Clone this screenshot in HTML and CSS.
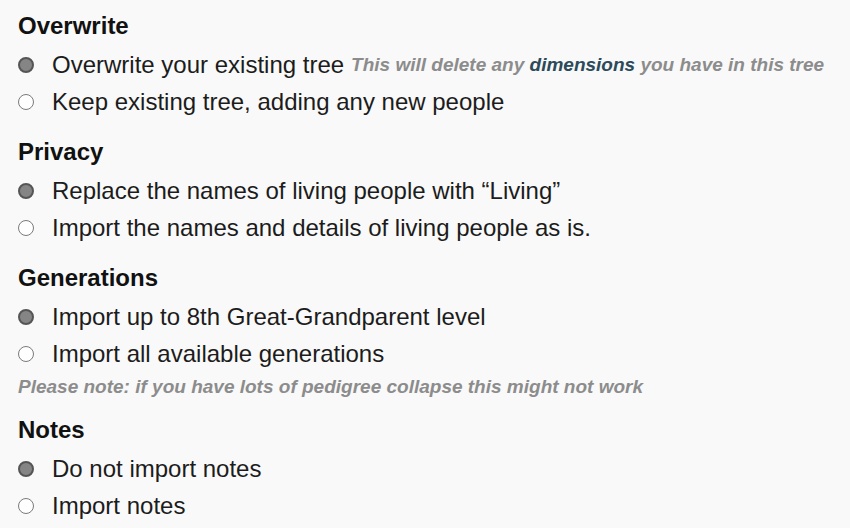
FILE: index.html
```html
<!DOCTYPE html>
<html lang="en">
<head>
  <meta charset="UTF-8">
  <meta name="viewport" content="width=device-width, initial-scale=1.0">
  <title>Import options</title>
  <link rel="stylesheet" href="styles.css">
</head>
<body>
  <form class="options">
    <section class="group">
      <h2>Overwrite</h2>
      <label class="choice"><input type="radio" name="overwrite" checked> Overwrite your existing tree <em class="hint">This will delete any <a href="#">dimensions</a> you have in this tree</em></label>
      <label class="choice"><input type="radio" name="overwrite"> Keep existing tree, adding any new people</label>
    </section>

    <section class="group">
      <h2>Privacy</h2>
      <label class="choice"><input type="radio" name="privacy" checked> Replace the names of living people with “Living”</label>
      <label class="choice"><input type="radio" name="privacy"> Import the names and details of living people as is.</label>
    </section>

    <section class="group">
      <h2>Generations</h2>
      <label class="choice"><input type="radio" name="generations" checked> Import up to 8th Great-Grandparent level</label>
      <label class="choice"><input type="radio" name="generations"> Import all available generations</label>
      <p class="note">Please note: if you have lots of pedigree collapse this might not work</p>
    </section>

    <section class="group">
      <h2>Notes</h2>
      <label class="choice"><input type="radio" name="notes" checked> Do not import notes</label>
      <label class="choice"><input type="radio" name="notes"> Import notes</label>
    </section>
  </form>
</body>
</html>
```

FILE: styles.css
```css
body {
  margin: 0;
  padding: 11px 18px 0;
  background-color: #f9f9f9;
  color: #1a1a1a;
  font-family: "Liberation Sans", Arial, sans-serif;
}
.group {
  margin-bottom: 16.5px;
}
h2 {
  margin: 0 0 5.5px;
  font-size: 24px;
  line-height: 30px;
  font-weight: bold;
  color: #111;
}
.choice {
  display: flex;
  align-items: center;
  height: 37px;
  font-size: 24px;
  white-space: nowrap;
  color: #1c1c1c;
}
.choice input {
  appearance: none;
  -webkit-appearance: none;
  width: 16px;
  height: 16px;
  margin: 0 18px 0 0;
  border: 1px solid #7a7a7a;
  border-radius: 50%;
  background: #fff;
  flex-shrink: 0;
}
.choice input:checked {
  background: #858585;
  border: 2px solid #555;
}
.hint {
  margin-left: 7px;
  font-size: 19px;
  font-weight: bold;
  color: #8c8c8c;
}
.hint a {
  color: #2c4a5a;
  text-decoration: none;
}
.note {
  margin: 3.5px 0 0;
  font-size: 19px;
  line-height: 22px;
  font-style: italic;
  font-weight: bold;
  color: #8c8c8c;
}
```
